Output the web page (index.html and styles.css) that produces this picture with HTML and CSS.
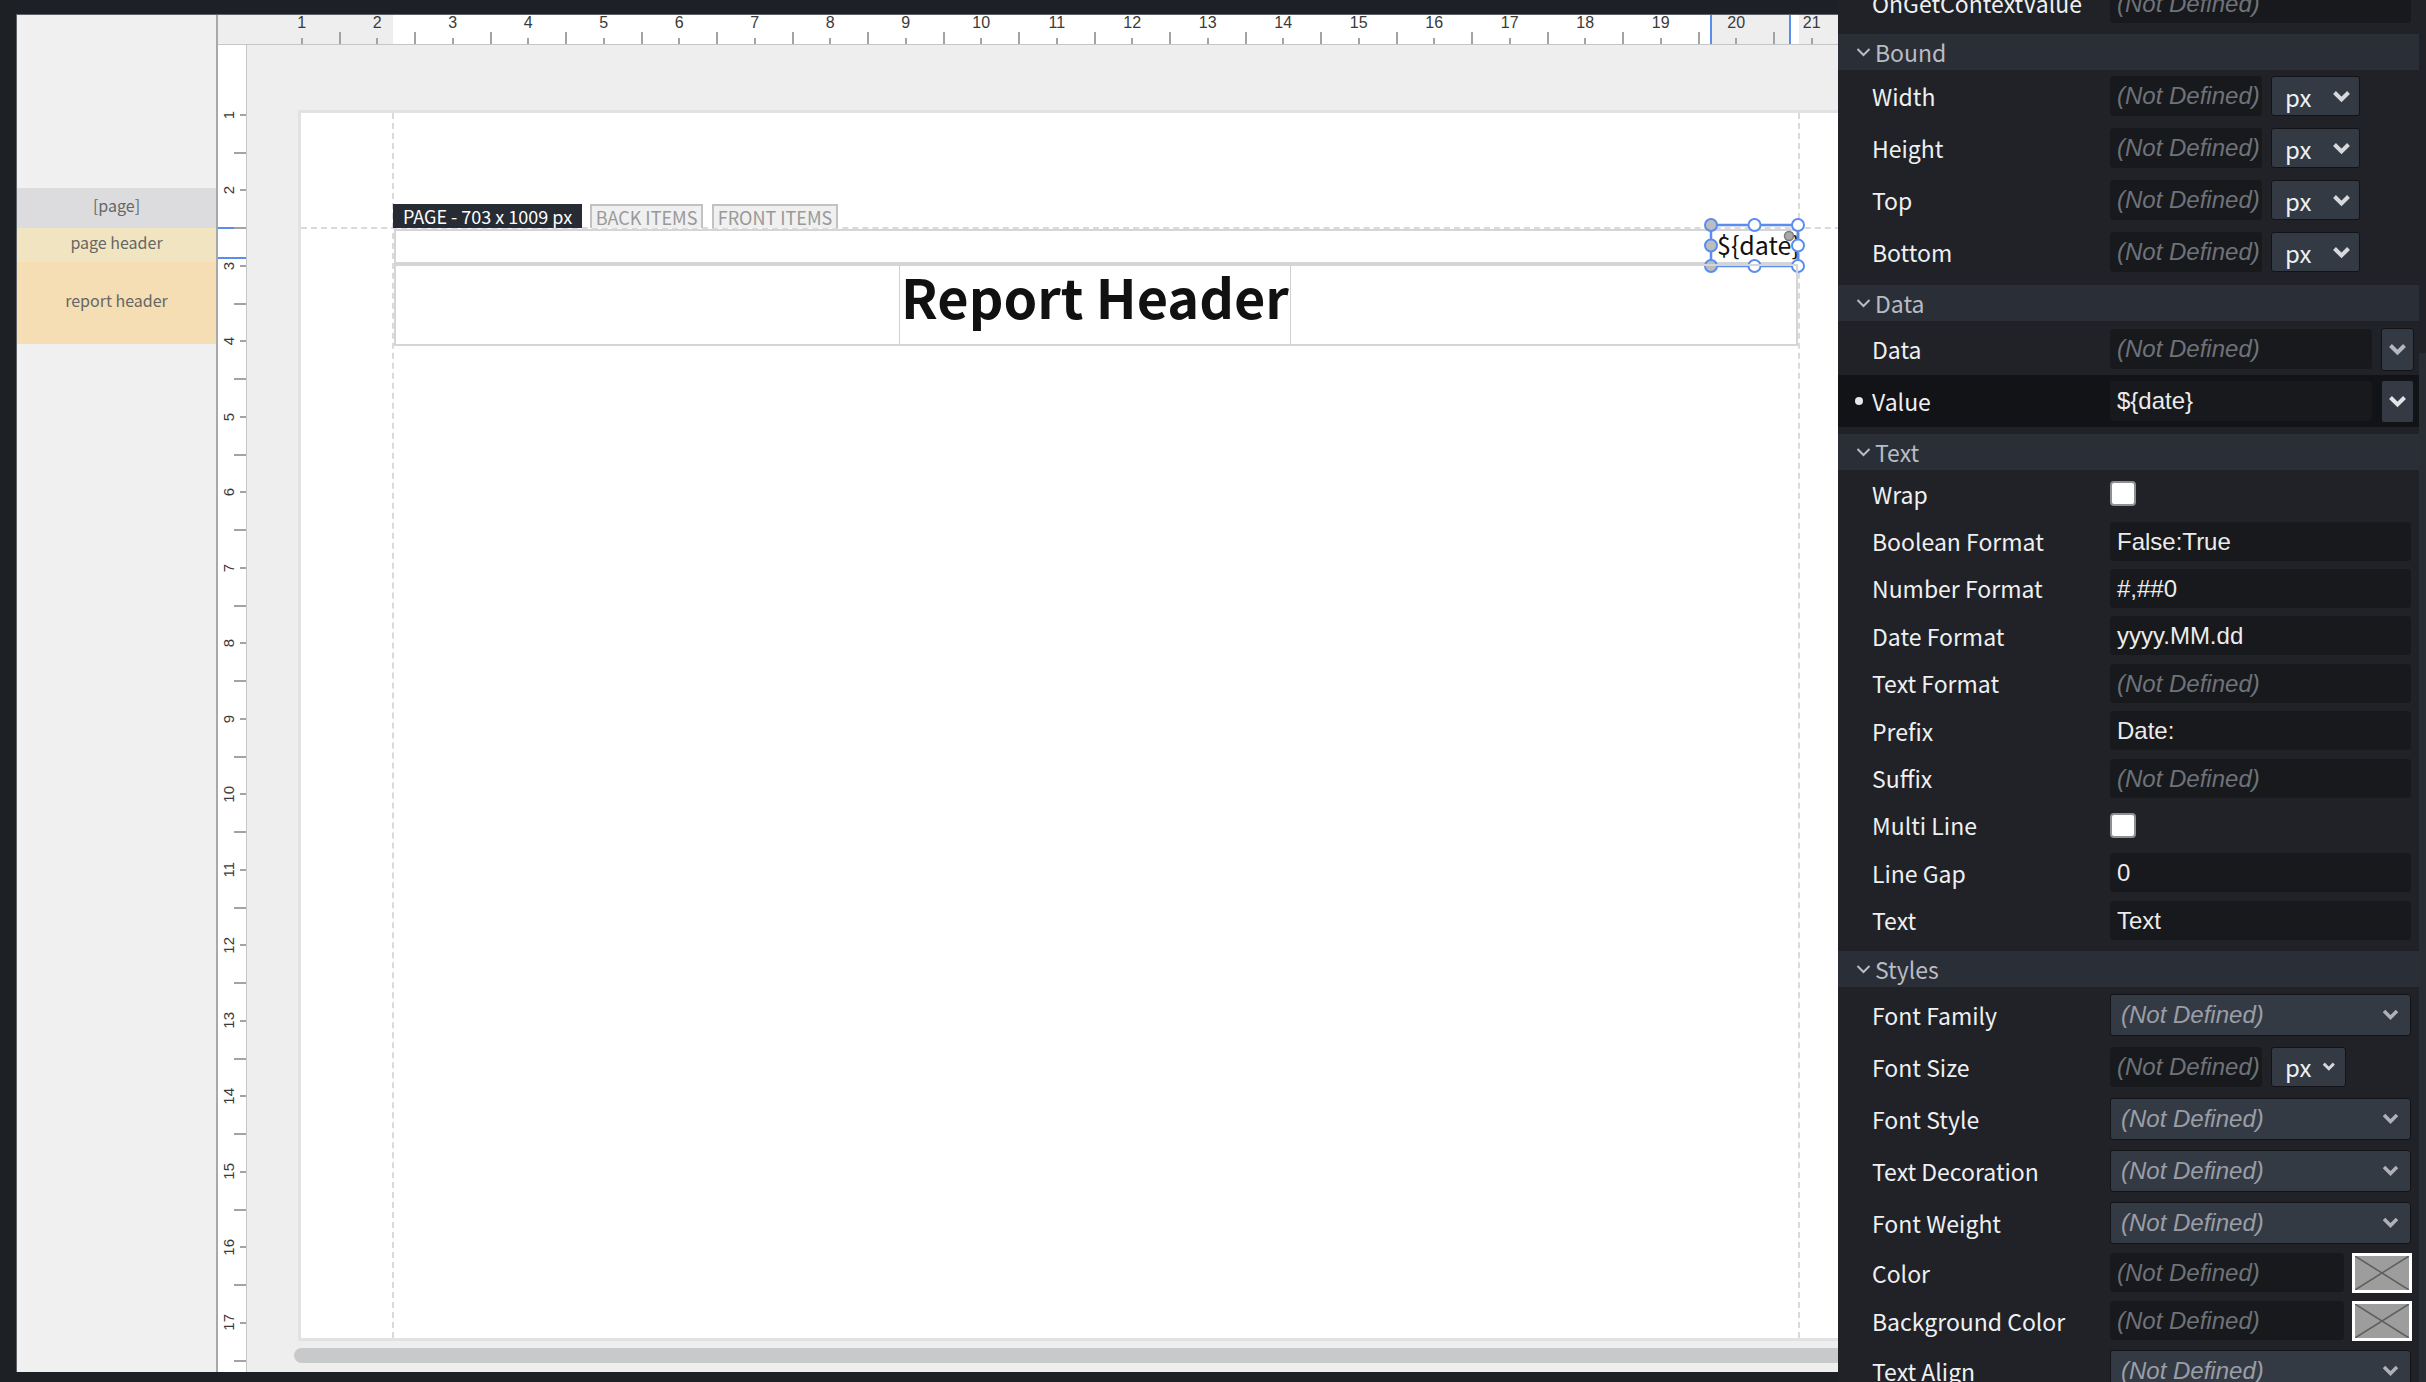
FILE: index.html
```html
<!DOCTYPE html>
<html lang="en">
<head>
    <meta charset="UTF-8">
    <title>Report Designer</title>
    <link rel="stylesheet" href="styles.css">
</head>
<body>
<div class="app">

    <div class="workspace">
        <div class="frame">

            <div class="bands">
                <div class="band band-page">[page]</div>
                <div class="band band-pageheader">page header</div>
                <div class="band band-reportheader">report header</div>
            </div>

            <div class="designer">
                <div class="ruler-h">
                    <div class="hr-cell">1</div><div class="hr-cell">2</div><div class="hr-cell">3</div>
                    <div class="hr-cell">4</div><div class="hr-cell">5</div><div class="hr-cell">6</div>
                    <div class="hr-cell">7</div><div class="hr-cell">8</div><div class="hr-cell">9</div>
                    <div class="hr-cell">10</div><div class="hr-cell">11</div><div class="hr-cell">12</div>
                    <div class="hr-cell">13</div><div class="hr-cell">14</div><div class="hr-cell">15</div>
                    <div class="hr-cell">16</div><div class="hr-cell">17</div><div class="hr-cell">18</div>
                    <div class="hr-cell">19</div><div class="hr-cell">20</div><div class="hr-cell">21</div>
                </div>

                <div class="designer-body">
                    <div class="ruler-v">
                        <div class="vr-cell"><span>1</span></div><div class="vr-cell"><span>2</span></div>
                        <div class="vr-cell"><span>3</span></div><div class="vr-cell"><span>4</span></div>
                        <div class="vr-cell"><span>5</span></div><div class="vr-cell"><span>6</span></div>
                        <div class="vr-cell"><span>7</span></div><div class="vr-cell"><span>8</span></div>
                        <div class="vr-cell"><span>9</span></div><div class="vr-cell"><span>10</span></div>
                        <div class="vr-cell"><span>11</span></div><div class="vr-cell"><span>12</span></div>
                        <div class="vr-cell"><span>13</span></div><div class="vr-cell"><span>14</span></div>
                        <div class="vr-cell"><span>15</span></div><div class="vr-cell"><span>16</span></div>
                        <div class="vr-cell"><span>17</span></div><div class="vr-cell"></div>
                    </div>

                    <div class="canvas">
                        <div class="page">
                            <div class="guide-v guide-left"></div>
                            <div class="guide-v guide-right"></div>
                            <div class="guide-h"></div>

                            <div class="page-tabs">
                                <div class="tab tab-page">PAGE - 703 x 1009 px</div>
                                <div class="tab tab-layer tab-back">BACK ITEMS</div>
                                <div class="tab tab-layer tab-front">FRONT ITEMS</div>
                            </div>

                            <div class="section sec-pageheader">
                                <div class="item item-date">
                                    ${date}
                                    <svg class="handles" width="101" height="55" viewBox="0 0 101 55">
                                        <rect x="7" y="7" width="87" height="41" fill="none" stroke="#5b8def" stroke-width="2.5"/>
                                        <g stroke="#5b8def" stroke-width="2">
                                            <circle cx="7" cy="7" r="6" fill="#bdbdbd"/>
                                            <circle cx="7" cy="27.5" r="6" fill="#bdbdbd"/>
                                            <circle cx="7" cy="48" r="6" fill="#bdbdbd"/>
                                            <circle cx="50.5" cy="7" r="6" fill="#fff"/>
                                            <circle cx="94" cy="7" r="6" fill="#fff"/>
                                            <circle cx="94" cy="27.5" r="6" fill="#fff"/>
                                            <circle cx="94" cy="48" r="6" fill="#fff"/>
                                            <circle cx="50.5" cy="48" r="6" fill="#fff"/>
                                        </g>
                                        <circle cx="85" cy="18" r="4.5" fill="#a9a9a9" stroke="#7a7a7a" stroke-width="1.5"/>
                                    </svg>
                                </div>
                            </div>

                            <div class="section sec-reportheader">
                                <div class="item item-title">Report Header</div>
                            </div>
                        </div>
                        <div class="hscroll"></div>
                    </div>
                </div>
            </div>

        </div>
    </div>

    <aside class="props">
        <div class="props-list">

            <div class="prop-group">
                <div class="row">
                    <span class="label">OnGetContextValue</span>
                    <div class="field empty">(Not Defined)</div>
                </div>
            </div>

            <div class="prop-group">
                <div class="group-head">
                    <svg width="15" height="10" viewBox="0 0 15 10"><polyline points="1.5,2 7.5,8 13.5,2" fill="none" stroke="#b8bcc3" stroke-width="2"/></svg>
                    Bound
                </div>
                <div class="row tall">
                    <span class="label">Width</span>
                    <div class="field short empty">(Not Defined)</div>
                    <div class="select unit">px <svg width="19" height="13" viewBox="0 0 19 13"><polyline points="2.5,2.5 9.5,9.5 16.5,2.5" fill="none" stroke="#d6d8db" stroke-width="4"/></svg></div>
                </div>
                <div class="row tall">
                    <span class="label">Height</span>
                    <div class="field short empty">(Not Defined)</div>
                    <div class="select unit">px <svg width="19" height="13" viewBox="0 0 19 13"><polyline points="2.5,2.5 9.5,9.5 16.5,2.5" fill="none" stroke="#d6d8db" stroke-width="4"/></svg></div>
                </div>
                <div class="row tall">
                    <span class="label">Top</span>
                    <div class="field short empty">(Not Defined)</div>
                    <div class="select unit">px <svg width="19" height="13" viewBox="0 0 19 13"><polyline points="2.5,2.5 9.5,9.5 16.5,2.5" fill="none" stroke="#d6d8db" stroke-width="4"/></svg></div>
                </div>
                <div class="row tall">
                    <span class="label">Bottom</span>
                    <div class="field short empty">(Not Defined)</div>
                    <div class="select unit">px <svg width="19" height="13" viewBox="0 0 19 13"><polyline points="2.5,2.5 9.5,9.5 16.5,2.5" fill="none" stroke="#d6d8db" stroke-width="4"/></svg></div>
                </div>
            </div>

            <div class="prop-group">
                <div class="group-head">
                    <svg width="15" height="10" viewBox="0 0 15 10"><polyline points="1.5,2 7.5,8 13.5,2" fill="none" stroke="#b8bcc3" stroke-width="2"/></svg>
                    Data
                </div>
                <div class="row tall first">
                    <span class="label">Data</span>
                    <div class="field medium empty">(Not Defined)</div>
                    <div class="drop-btn"><svg width="19" height="13" viewBox="0 0 19 13"><polyline points="2.5,2.5 9.5,9.5 16.5,2.5" fill="none" stroke="#b4b8be" stroke-width="4"/></svg></div>
                </div>
                <div class="row tall current">
                    <span class="dot"></span>
                    <span class="label">Value</span>
                    <div class="field medium">${date}</div>
                    <div class="drop-btn"><svg width="19" height="13" viewBox="0 0 19 13"><polyline points="2.5,2.5 9.5,9.5 16.5,2.5" fill="none" stroke="#e2e4e7" stroke-width="4"/></svg></div>
                </div>
            </div>

            <div class="prop-group">
                <div class="group-head">
                    <svg width="15" height="10" viewBox="0 0 15 10"><polyline points="1.5,2 7.5,8 13.5,2" fill="none" stroke="#b8bcc3" stroke-width="2"/></svg>
                    Text
                </div>
                <div class="row slim"><span class="label">Wrap</span><span class="check"></span></div>
                <div class="row slim"><span class="label">Boolean Format</span><div class="field">False:True</div></div>
                <div class="row slim"><span class="label">Number Format</span><div class="field">#,##0</div></div>
                <div class="row slim"><span class="label">Date Format</span><div class="field">yyyy.MM.dd</div></div>
                <div class="row slim"><span class="label">Text Format</span><div class="field empty">(Not Defined)</div></div>
                <div class="row slim"><span class="label">Prefix</span><div class="field">Date:</div></div>
                <div class="row slim"><span class="label">Suffix</span><div class="field empty">(Not Defined)</div></div>
                <div class="row slim"><span class="label">Multi Line</span><span class="check"></span></div>
                <div class="row slim"><span class="label">Line Gap</span><div class="field">0</div></div>
                <div class="row slim"><span class="label">Text</span><div class="field">Text</div></div>
            </div>

            <div class="prop-group">
                <div class="group-head">
                    <svg width="15" height="10" viewBox="0 0 15 10"><polyline points="1.5,2 7.5,8 13.5,2" fill="none" stroke="#b8bcc3" stroke-width="2"/></svg>
                    Styles
                </div>
                <div class="row tall first">
                    <span class="label">Font Family</span>
                    <div class="select wide">(Not Defined) <svg width="19" height="13" viewBox="0 0 19 13"><polyline points="3,3 9.5,9.5 16,3" fill="none" stroke="#aeb2b8" stroke-width="3.5"/></svg></div>
                </div>
                <div class="row tall">
                    <span class="label">Font Size</span>
                    <div class="field short empty">(Not Defined)</div>
                    <div class="select unit small">px <svg width="19" height="13" viewBox="0 0 19 13"><polyline points="2.5,2.5 9.5,9.5 16.5,2.5" fill="none" stroke="#d6d8db" stroke-width="4"/></svg></div>
                </div>
                <div class="row tall">
                    <span class="label">Font Style</span>
                    <div class="select wide">(Not Defined) <svg width="19" height="13" viewBox="0 0 19 13"><polyline points="3,3 9.5,9.5 16,3" fill="none" stroke="#aeb2b8" stroke-width="3.5"/></svg></div>
                </div>
                <div class="row tall">
                    <span class="label">Text Decoration</span>
                    <div class="select wide">(Not Defined) <svg width="19" height="13" viewBox="0 0 19 13"><polyline points="3,3 9.5,9.5 16,3" fill="none" stroke="#aeb2b8" stroke-width="3.5"/></svg></div>
                </div>
                <div class="row tall">
                    <span class="label">Font Weight</span>
                    <div class="select wide">(Not Defined) <svg width="19" height="13" viewBox="0 0 19 13"><polyline points="3,3 9.5,9.5 16,3" fill="none" stroke="#aeb2b8" stroke-width="3.5"/></svg></div>
                </div>
                <div class="row">
                    <span class="label">Color</span>
                    <div class="field color-field empty">(Not Defined)</div>
                    <div class="swatch"><svg width="54" height="34" viewBox="0 0 54 34"><rect width="54" height="34" fill="#9d9d9d"/><path d="M0 0 L54 34 M54 0 L0 34" stroke="#5e5e5e" stroke-width="1.5"/></svg></div>
                </div>
                <div class="row">
                    <span class="label">Background Color</span>
                    <div class="field color-field empty">(Not Defined)</div>
                    <div class="swatch"><svg width="54" height="34" viewBox="0 0 54 34"><rect width="54" height="34" fill="#9d9d9d"/><path d="M0 0 L54 34 M54 0 L0 34" stroke="#5e5e5e" stroke-width="1.5"/></svg></div>
                </div>
                <div class="row tall">
                    <span class="label">Text Align</span>
                    <div class="select wide">(Not Defined) <svg width="19" height="13" viewBox="0 0 19 13"><polyline points="3,3 9.5,9.5 16,3" fill="none" stroke="#aeb2b8" stroke-width="3.5"/></svg></div>
                </div>
            </div>

        </div>
        <div class="vscroll"></div>
    </aside>

</div>
</body>
</html>
```

FILE: styles.css
```css
body {
    margin: 0;
    background-color: #1d2025;
    font-family: "Noto Sans CJK KR", "Noto Sans", sans-serif;
    overflow: hidden;
}

.app {
    display: flex;
    width: 2426px;
    height: 1382px;
}

/* ---------- designer side ---------- */

.workspace {
    width: 1838px;
    flex: none;
    box-sizing: border-box;
    padding: 14px 0 10px 16px;
    display: flex;
}

.frame {
    flex: 1;
    display: flex;
    border-top: 1px solid #5d6168;
    border-left: 1px solid #5d6168;
    overflow: hidden;
}

.bands {
    width: 199px;
    flex: none;
    background-color: #f0f0f0;
    border-right: 2px solid #a8a8a8;
    padding-top: 173px;
}

.band {
    display: flex;
    align-items: center;
    justify-content: center;
    box-sizing: border-box;
    padding-bottom: 7px;
    font-size: 16px;
    color: #666;
}

.band-page {
    height: 40px;
    background-color: #dcdcdf;
}

.band-pageheader {
    height: 34px;
    background-color: #f1e5c1;
}

.band-reportheader {
    height: 82px;
    background-color: #f5deb3;
}

.designer {
    flex: 1;
    display: flex;
    flex-direction: column;
    min-width: 0;
}

.ruler-h {
    flex: none;
    height: 29px;
    border-bottom: 1px solid #c6c6c6;
    display: flex;
    padding-left: 46px;
    overflow: hidden;
    background: linear-gradient(to right,
        #eee 175px, #fff 175px, #fff 1492px,
        #5b8def 1492px, #5b8def 1494px, #eee 1494px, #eee 1571px,
        #5b8def 1571px, #5b8def 1573px, #fff 1573px, #fff 1581px, #eee 1581px);
}

.hr-cell {
    width: 75.5px;
    flex: none;
    position: relative;
    text-align: center;
    font: 16px/16px "Liberation Sans", Arial, sans-serif;
    color: #3a3a3a;
}

.hr-cell::before {
    content: "";
    position: absolute;
    left: calc(50% - 1px);
    bottom: 0;
    width: 2px;
    height: 6px;
    background-color: #a3a3a3;
}

.hr-cell::after {
    content: "";
    position: absolute;
    right: -1px;
    bottom: 0;
    width: 2px;
    height: 12px;
    background-color: #a3a3a3;
}

.designer-body {
    flex: 1;
    display: flex;
    min-height: 0;
}

.ruler-v {
    flex: none;
    width: 28px;
    border-right: 1px solid #c6c6c6;
    padding-top: 32px;
    display: flex;
    flex-direction: column;
    overflow: hidden;
    background: linear-gradient(to bottom,
        #fff 182px, #5b8def 182px, #5b8def 184px, #fff 184px,
        #fff 212px, #5b8def 212px, #5b8def 214px, #fff 214px);
}

.vr-cell {
    height: 75.5px;
    flex: none;
    position: relative;
    display: flex;
    align-items: center;
}

.vr-cell span {
    writing-mode: vertical-rl;
    transform: rotate(180deg);
    font: 15px/15px "Liberation Sans", Arial, sans-serif;
    color: #3a3a3a;
    margin-left: 3px;
}

.vr-cell::before {
    content: "";
    position: absolute;
    right: 0;
    top: calc(50% - 1px);
    width: 6px;
    height: 2px;
    background-color: #a3a3a3;
}

.vr-cell::after {
    content: "";
    position: absolute;
    right: 0;
    bottom: -1px;
    width: 12px;
    height: 2px;
    background-color: #a3a3a3;
}

.canvas {
    flex: 1;
    position: relative;
    overflow: hidden;
    background-color: #eee;
}

.page {
    position: relative;
    width: 1590px;
    height: 1225px;
    margin: 68px 0 0 54px;
    padding: 91px 0 0 92px;
    box-sizing: border-box;
    background-color: #fff;
    box-shadow: 0 0 0 3px #e2e2e5;
}

.guide-v {
    position: absolute;
    top: 0;
    bottom: 0;
    border-left: 2px dashed #dadade;
}

.guide-left {
    left: 91px;
}

.guide-right {
    left: 1497px;
}

.guide-h {
    position: absolute;
    left: 0;
    right: 0;
    top: 114px;
    border-top: 2px dashed #dadade;
}

.page-tabs {
    position: relative;
    display: flex;
    height: 24px;
}

.tab {
    box-sizing: border-box;
    height: 24px;
    font-size: 18px;
    line-height: 22px;
    text-align: center;
    white-space: nowrap;
}

.tab-page {
    width: 189px;
    background-color: #272b33;
    color: #fff;
    line-height: 24px;
}

.tab-layer {
    border: 2px solid #c2c2c2;
    border-bottom: none;
    background-color: #f0f0f0;
    color: #999;
}

.tab-back {
    width: 113px;
    margin-left: 8px;
}

.tab-front {
    width: 126px;
    margin-left: 9px;
}

.section {
    position: relative;
    width: 1404px;
    margin-left: 1px;
    box-sizing: border-box;
    border: 2px solid #d5d5d5;
}

.sec-pageheader {
    height: 35px;
    margin-top: 1px;
}

.sec-reportheader {
    height: 82px;
}

.item {
    position: absolute;
    box-sizing: border-box;
    color: #111;
}

.item-title {
    left: 503px;
    top: 0;
    bottom: 0;
    width: 392px;
    border-left: 1px solid #d0d0d0;
    border-right: 1px solid #d0d0d0;
    display: flex;
    align-items: center;
    justify-content: center;
    font-size: 54px;
    font-weight: 700;
    padding-bottom: 20px;
    white-space: nowrap;
}

.item-date {
    right: -2px;
    top: -6px;
    width: 87px;
    height: 41px;
    padding-left: 6px;
    font-size: 25px;
    line-height: 39px;
    white-space: nowrap;
}

.handles {
    position: absolute;
    left: -7px;
    top: -7px;
}

.hscroll {
    position: absolute;
    left: 47px;
    right: -10px;
    bottom: 9px;
    height: 15px;
    border-radius: 8px;
    background-color: #c8c9cb;
}

/* ---------- property panel ---------- */

.props {
    position: relative;
    width: 588px;
    flex: none;
    height: 1382px;
    overflow: hidden;
    background-color: #202227;
}

.props-list {
    margin-top: -21px;
    padding-right: 7px;
}

.prop-group {
    padding-bottom: 7px;
}

.group-head {
    height: 36px;
    display: flex;
    align-items: center;
    gap: 4px;
    padding-left: 18px;
    background-color: #2a2e37;
    color: #b8bcc3;
    font-size: 23px;
}

.row {
    height: 48px;
    display: flex;
    align-items: center;
    padding-left: 34px;
    color: #eef0f2;
    font-size: 23px;
}

.row.tall {
    height: 52px;
}

.row.slim {
    height: 47.4px;
}

.row.first {
    margin-top: 2px;
}

.row.current {
    background-color: #121316;
    padding-left: 17px;
}

.dot {
    width: 8px;
    height: 8px;
    border-radius: 50%;
    background-color: #e8e8e8;
    margin-right: 9px;
    flex: none;
}

.label {
    width: 238px;
    flex: none;
    white-space: nowrap;
}

.field {
    width: 301px;
    height: 39px;
    box-sizing: border-box;
    padding-left: 7px;
    border-radius: 4px;
    background-color: #18191c;
    font: 24px/39px "Liberation Sans", Arial, sans-serif;
    color: #ececec;
    white-space: nowrap;
    overflow: hidden;
}

.field.empty {
    font-style: italic;
    color: #6e7279;
}

.row.tall .field {
    height: 40px;
    line-height: 40px;
}

.field.short {
    width: 152px;
}

.field.medium {
    width: 262px;
}

.field.color-field {
    width: 234px;
}

.select {
    height: 40px;
    box-sizing: border-box;
    display: flex;
    align-items: center;
    justify-content: space-between;
    border: 1px solid #121316;
    border-radius: 3px;
    background-color: #343a44;
    white-space: nowrap;
}

.select.unit {
    width: 89px;
    margin-left: 9px;
    padding: 0 8px 0 13px;
    color: #eef0f2;
    font-size: 24px;
}

.select.unit.small {
    width: 75px;
    padding-right: 9px;
    justify-content: flex-start;
    gap: 11px;
}

.select.wide {
    width: 301px;
    height: 42px;
    padding: 0 10px 0 10px;
    font: italic 24px "Liberation Sans", Arial, sans-serif;
    color: #9a9ea6;
}

.drop-btn {
    width: 33px;
    height: 43px;
    margin-left: 9px;
    box-sizing: border-box;
    display: flex;
    align-items: center;
    justify-content: center;
    border: 1px solid #121316;
    border-radius: 3px;
    background-color: #343a44;
}

.check {
    width: 26px;
    height: 25px;
    box-sizing: border-box;
    border: 2px solid #8d8f93;
    border-radius: 4px;
    background-color: #fff;
}

.swatch {
    width: 60px;
    height: 40px;
    margin-left: 8px;
    box-sizing: border-box;
    border: 3px solid #fff;
    background-color: #000;
    display: flex;
    align-items: center;
    justify-content: center;
}

.vscroll {
    position: absolute;
    right: 0;
    top: 353px;
    bottom: 0;
    width: 7px;
    background-color: #2a2d33;
}
```
